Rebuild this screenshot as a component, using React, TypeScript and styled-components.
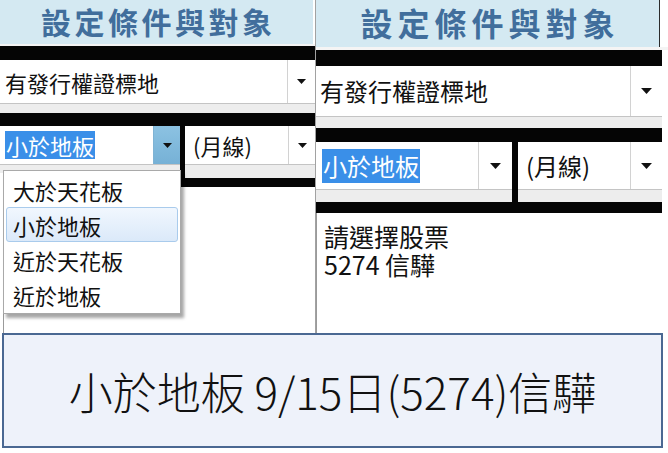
import React from 'react';
import styled, { createGlobalStyle } from 'styled-components';

const Global = createGlobalStyle`
  html, body { margin: 0; padding: 0; background: #fff; }
  body {
    width: 668px; height: 453px; overflow: hidden;
    font-family: "Noto Sans CJK TC", "Noto Sans", sans-serif;
    color: #111;
  }
`;

const Page = styled.div`
  width: 668px;
  height: 453px;
  display: flex;
  flex-direction: column;
`;

const TopRow = styled.div`
  height: 333px;
  display: flex;
`;

const LeftPanel = styled.div`
  position: relative;
  width: 316px;
  box-sizing: border-box;
  border-right: 1px solid #a2a2a2;
  display: flex;
  flex-direction: column;
`;

const RightPanel = styled.div`
  flex: 1;
  display: flex;
  flex-direction: column;
`;

const Header = styled.div<{ $w: number; $h: number; $font: number; $ls: number; $edge?: boolean }>`
  width: ${p => p.$w}px;
  height: ${p => p.$h}px;
  flex: none;
  box-sizing: border-box;
  background: #d4e9f2;
  border-right: ${p => (p.$edge ? '1px solid #2c2c2c' : 'none')};
  display: flex;
  align-items: center;
  justify-content: center;
  padding-left: ${p => p.$ls}px;
  padding-bottom: 3px;
  font-weight: 700;
  font-size: ${p => p.$font}px;
  letter-spacing: ${p => p.$ls}px;
  line-height: 1;
  color: #416e9c;
`;

const Gap = styled.div<{ $h: number }>`
  height: ${p => p.$h}px;
  flex: none;
  background: #f4f4f4;
`;

const BlackBar = styled.div<{ $h: number; $w?: number }>`
  height: ${p => p.$h}px;
  width: ${p => (p.$w ? `${p.$w}px` : 'auto')};
  flex: none;
  background: #050505;
`;

const Strip = styled.div<{ $h: number; $w?: number }>`
  height: ${p => p.$h}px;
  width: ${p => (p.$w ? `${p.$w}px` : 'auto')};
  flex: none;
  background: #ededed;
`;

const Select = styled.div<{ $h: number; $font: number; $w?: number }>`
  height: ${p => p.$h}px;
  width: ${p => (p.$w ? `${p.$w}px` : 'auto')};
  flex: none;
  box-sizing: border-box;
  background: #fff;
  border-bottom: 1px solid #c4c4c4;
  display: flex;
  align-items: stretch;
  font-size: ${p => p.$font}px;
  line-height: 1;
`;

const SelText = styled.div<{ $pad: number }>`
  flex: 1;
  display: flex;
  align-items: center;
  padding-left: ${p => p.$pad}px;
  white-space: nowrap;
  overflow: hidden;
`;

const Selected = styled.span<{ $py: number }>`
  background: #3a8fe8;
  color: #fff;
  padding: ${p => p.$py}px 1px;
`;

const ArrowBtn = styled.div<{ $w: number; $hot?: boolean }>`
  width: ${p => p.$w}px;
  flex: none;
  box-sizing: border-box;
  border-left: 1px solid ${p => (p.$hot ? '#7fb3d4' : '#d2d2d2')};
  background: ${p => (p.$hot ? 'linear-gradient(#8cc2e2, #76b1d6)' : '#fff')};
  display: flex;
  align-items: center;
  justify-content: center;
`;

const Row2 = styled.div<{ $w?: number }>`
  display: flex;
  flex: none;
  width: ${p => (p.$w ? `${p.$w}px` : 'auto')};
`;

const Col = styled.div<{ $w?: number }>`
  display: flex;
  flex-direction: column;
  width: ${p => (p.$w ? `${p.$w}px` : 'auto')};
  flex: ${p => (p.$w ? 'none' : '1')};
`;

const Divider = styled.div<{ $w: number }>`
  width: ${p => p.$w}px;
  flex: none;
  background: #050505;
`;

const LeftBody = styled.div`
  flex: 1;
  margin-left: 3px;
  border-left: 1px solid #9a9a9a;
  background: #fff;
`;

const DropList = styled.ul`
  position: absolute;
  top: 170px;
  left: 3px;
  width: 178px;
  margin: 0;
  padding: 1px 2px;
  box-sizing: border-box;
  list-style: none;
  background: #fff;
  border: 1px solid #a9a9a9;
  box-shadow: 3px 4px 3px rgba(0, 0, 0, 0.35);
`;

const DropItem = styled.li<{ $active?: boolean }>`
  height: 35px;
  box-sizing: border-box;
  display: flex;
  align-items: center;
  padding-left: 6px;
  font-size: 22px;
  line-height: 1;
  border-radius: 3px;
  border: 1px solid ${p => (p.$active ? '#a9cbec' : 'transparent')};
  background: ${p => (p.$active ? 'linear-gradient(#f1f7fe, #dbe9f9)' : 'transparent')};
`;

const TextArea = styled.div`
  flex: 1;
  border-left: 1px solid #9a9a9a;
  padding: 9px 7px;
  display: flex;
  flex-direction: column;
`;

const TextLine = styled.div`
  font-size: 25px;
  line-height: 28px;
  height: 28px;
  white-space: nowrap;
`;

const Caption = styled.div`
  height: 115px;
  margin: 0 5px 0 2px;
  box-sizing: border-box;
  border: 2px solid #4a6892;
  background: #eef2fa;
  display: flex;
  align-items: center;
  justify-content: center;
  font-size: 44px;
  font-weight: 300;
  line-height: 1;
  color: #111;
`;

const Arrow = ({ w }: { w: number }) => (
  <svg width={w} height={Math.round(w * 0.55)} viewBox="0 0 10 5.5">
    <polygon points="0,0 10,0 5,5.5" fill="#111" />
  </svg>
);

export default function App() {
  return (
    <>
      <Global />
      <Page>
        <TopRow>
          <LeftPanel>
            <Header $w={313} $h={44} $font={30} $ls={3.5}>設定條件與對象</Header>
            <Gap $h={2} />
            <BlackBar $h={14} />
            <Select $h={44} $font={22}>
              <SelText $pad={5}>有發行權證標地</SelText>
              <ArrowBtn $w={28}><Arrow w={9} /></ArrowBtn>
            </Select>
            <Strip $h={9} />
            <BlackBar $h={13} />
            <Row2>
              <Col $w={180}>
                <Select $h={39} $font={22}>
                  <SelText $pad={5}><Selected $py={3}>小於地板</Selected></SelText>
                  <ArrowBtn $w={27} $hot><Arrow w={9} /></ArrowBtn>
                </Select>
                <Strip $h={8} />
              </Col>
              <Divider $w={5} />
              <Col>
                <Select $h={39} $font={22}>
                  <SelText $pad={8}>(月線)</SelText>
                  <ArrowBtn $w={27}><Arrow w={9} /></ArrowBtn>
                </Select>
                <Strip $h={13} />
                <BlackBar $h={9} />
              </Col>
            </Row2>
            <LeftBody />
            <DropList>
              <DropItem>大於天花板</DropItem>
              <DropItem $active>小於地板</DropItem>
              <DropItem>近於天花板</DropItem>
              <DropItem>近於地板</DropItem>
            </DropList>
          </LeftPanel>
          <RightPanel>
            <Header $w={344} $h={47} $font={32} $ls={5} $edge>設定條件與對象</Header>
            <Gap $h={3} />
            <BlackBar $h={16} $w={346} />
            <Select $h={51} $font={24} $w={346}>
              <SelText $pad={4}>有發行權證標地</SelText>
              <ArrowBtn $w={32}><Arrow w={11} /></ArrowBtn>
            </Select>
            <Strip $h={11} $w={346} />
            <BlackBar $h={14} $w={346} />
            <Row2 $w={346}>
              <Col $w={196}>
                <Select $h={48} $font={24}>
                  <SelText $pad={6}><Selected $py={5}>小於地板</Selected></SelText>
                  <ArrowBtn $w={34}><Arrow w={11} /></ArrowBtn>
                </Select>
                <Strip $h={12} />
              </Col>
              <Divider $w={6} />
              <Col>
                <Select $h={48} $font={24}>
                  <SelText $pad={8}>(月線)</SelText>
                  <ArrowBtn $w={32}><Arrow w={11} /></ArrowBtn>
                </Select>
                <Strip $h={12} />
              </Col>
            </Row2>
            <BlackBar $h={11} $w={346} />
            <TextArea>
              <TextLine>請選擇股票</TextLine>
              <TextLine>5274 信驊</TextLine>
            </TextArea>
          </RightPanel>
        </TopRow>
        <Caption>小於地板 9/15日(5274)信驊</Caption>
      </Page>
    </>
  );
}
